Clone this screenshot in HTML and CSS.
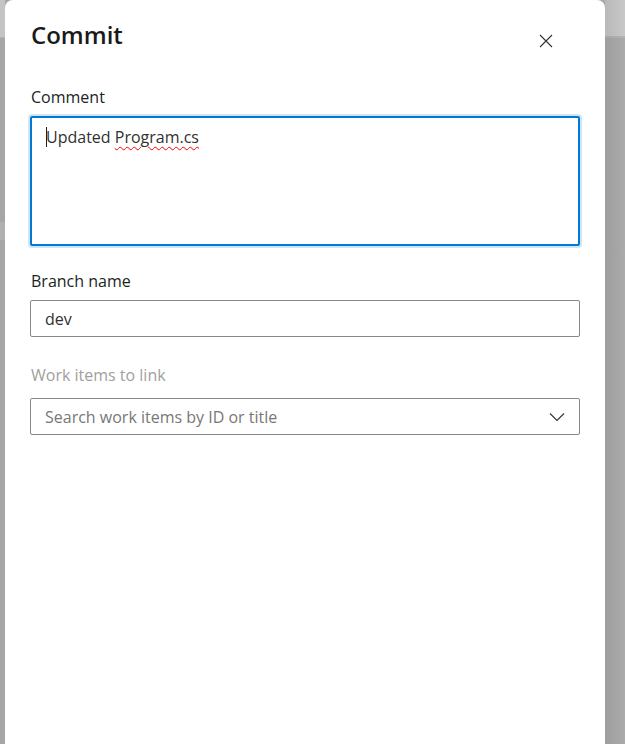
FILE: index.html
```html
<!DOCTYPE html>
<html lang="en">
<head>
<meta charset="utf-8">
<title>Commit</title>
<link rel="stylesheet" href="styles.css">
</head>
<body>
<div class="backdrop-left"></div>
<main class="panel">
  <header class="panel-header">
    <h1 class="title">Commit</h1>
    <button class="close" aria-label="Close">
      <svg width="14" height="14" viewBox="0 0 14 14"><path d="M1 1 L13 13 M13 1 L1 13" stroke="#323130" stroke-width="1.1" fill="none"/></svg>
    </button>
  </header>
  <section class="field first">
    <label class="label">Comment</label>
    <div class="textarea focused"><span class="caret"></span>Updated <span class="misspelled">Program.cs</span></div>
  </section>
  <section class="field">
    <label class="label">Branch name</label>
    <div class="input">dev</div>
  </section>
  <section class="field">
    <label class="label disabled">Work items to link</label>
    <div class="input dropdown">
      <span class="placeholder">Search work items by ID or title</span>
      <svg class="chevron" width="16" height="10" viewBox="0 0 16 10"><path d="M1 1.5 L8 8.5 L15 1.5" stroke="#323130" stroke-width="1.1" fill="none"/></svg>
    </div>
  </section>
</main>
<div class="backdrop-right"></div>
</body>
</html>
```
FILE: styles.css
```css
html, body {
  margin: 0;
  height: 100%;
}
body {
  display: flex;
  width: 625px;
  height: 744px;
  overflow: hidden;
  font-family: "Open Sans", "Noto Sans", sans-serif;
  color: #201f1e;
  background: #a8a8a8;
}
.backdrop-left {
  width: 5px;
  flex: none;
  background:
    linear-gradient(#c4c4c4 0 37px, #b2b2b2 37px 38px, #a6a6a6 38px 222px, #b0b0b0 222px 240px, #a6a6a6 240px);
}
.backdrop-right {
  width: 20px;
  flex: none;
  background:
    linear-gradient(to right, rgba(0,0,0,0.08), rgba(0,0,0,0)),
    linear-gradient(#c8c8c8 0 36px, #b4b4b4 36px 38px, #ababab 38px);
}
.panel {
  width: 600px;
  flex: none;
  background: #ffffff;
  border-radius: 8px 8px 0 0;
  padding: 0 25px;
  box-sizing: border-box;
}
.panel-header {
  display: flex;
  justify-content: space-between;
  align-items: flex-start;
  padding-top: 19px;
  height: 86px;
  box-sizing: border-box;
}
.title {
  margin: 0;
  font-size: 24px;
  line-height: 32px;
  font-weight: 600;
  padding-left: 1px;
  color: #1b1a19;
}
.close {
  border: none;
  background: none;
  padding: 0;
  margin-top: 15px;
  margin-right: 27px;
  width: 14px;
  height: 14px;
  display: flex;
}
.field {
  display: flex;
  flex-direction: column;
  margin-bottom: 23px;
}
.field.first {
  margin-bottom: 24px;
}
.label {
  font-size: 16px;
  line-height: 22px;
  padding-left: 1px;
  margin-bottom: 8px;
  color: #201f1e;
}
.label.disabled {
  color: #a19f9d;
  margin-top: 4px;
  margin-bottom: 12px;
}
.textarea {
  height: 130px;
  box-sizing: border-box;
  border: 2px solid #0078d4;
  border-radius: 2px;
  box-shadow: 0 0 0 2px #d0e5f6;
  padding: 8px 14px;
  font-size: 16px;
  line-height: 22px;
  color: #323130;
}
.caret {
  display: inline-block;
  width: 1px;
  height: 20px;
  background: #201f1e;
  vertical-align: -4px;
  margin-right: -1px;
}
.misspelled {
  text-decoration: underline wavy #ff0000;
  text-decoration-thickness: 1px;
  text-underline-offset: 3px;
}
.input {
  height: 37px;
  box-sizing: border-box;
  border: 1px solid #8a8886;
  border-radius: 2px;
  padding: 0 14px;
  display: flex;
  align-items: center;
  font-size: 16px;
  color: #323130;
}
.dropdown {
  justify-content: space-between;
}
.placeholder {
  color: #797775;
}
```
